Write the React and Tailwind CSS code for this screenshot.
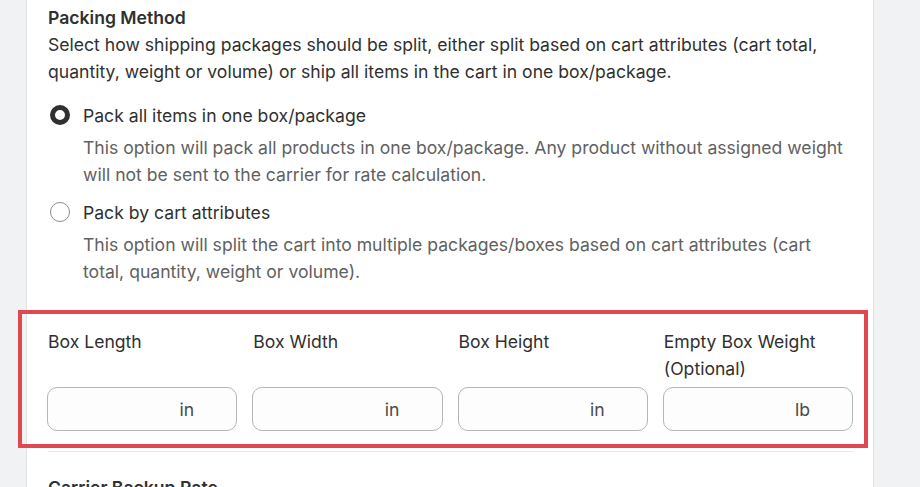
const dims = [
  { label: "Box Length", unit: "in" },
  { label: "Box Width", unit: "in" },
  { label: "Box Height", unit: "in" },
  { label: "Empty Box Weight (Optional)", unit: "lb" },
];

function Radio({ checked }) {
  return checked ? (
    <span className="mt-[3px] block h-5 w-5 shrink-0 rounded-full border-[5px] border-[#303030] bg-white" />
  ) : (
    <span className="mt-[3px] block h-5 w-5 shrink-0 rounded-full border border-[#8a8a8a] bg-white" />
  );
}

function Option({ checked, label, children }) {
  return (
    <div className="flex gap-[13px] pl-[2px]">
      <Radio checked={checked} />
      <div>
        <p className="text-[#303030]">{label}</p>
        <p className="mt-[5px] text-[#616161]">{children}</p>
      </div>
    </div>
  );
}

export default function App() {
  return (
    <div
      className="flex h-[487px] w-[920px] overflow-hidden bg-[#f1f2f4] text-[17.6px] leading-[27px]"
      style={{ fontFamily: "Inter, 'Liberation Sans', sans-serif" }}
    >
      <div className="ml-[26px] w-[848px] border-x border-[#e3e3e3] bg-white pl-[21px] pr-[20px] pt-[4px]">
        <h2 className="font-semibold text-[#303030]">Packing Method</h2>
        <p className="text-[#303030]">
          Select how shipping packages should be split, either split based on cart attributes (cart total,
          <br />
          quantity, weight or volume) or ship all items in the cart in one box/package.
        </p>

        <div className="mt-[17px] flex flex-col gap-[11px]">
          <Option checked label="Pack all items in one box/package">
            This option will pack all products in one box/package. Any product without assigned weight
            <br />
            will not be sent to the carrier for rate calculation.
          </Option>
          <Option label="Pack by cart attributes">
            This option will split the cart into multiple packages/boxes based on cart attributes (cart
            <br />
            total, quantity, weight or volume).
          </Option>
        </div>

        <div className="-ml-[30px] -mr-[15px] mt-[25px] border-4 border-[#e0474f] pb-[13px] pl-[25px] pr-[11px] pt-[14px]">
          <div className="grid grid-cols-4 gap-x-[15px]">
            {dims.map((d) => (
              <div key={d.label} className="flex flex-col">
                <p className="h-[54px] pl-[1px] text-[#303030]">{d.label}</p>
                <div className="mt-[5px] flex h-[44px] items-center justify-end rounded-[10px] border border-[#b5b5b5] bg-[#fdfdfd] pr-[42px] text-[#4a4a4a]">
                  {d.unit}
                </div>
              </div>
            ))}
          </div>
        </div>
        <div className="mt-[3px] h-px bg-[#ebebeb]" />

        <h2 className="mt-[22px] font-semibold text-[#303030]">Carrier Backup Rate</h2>
      </div>
    </div>
  );
}
